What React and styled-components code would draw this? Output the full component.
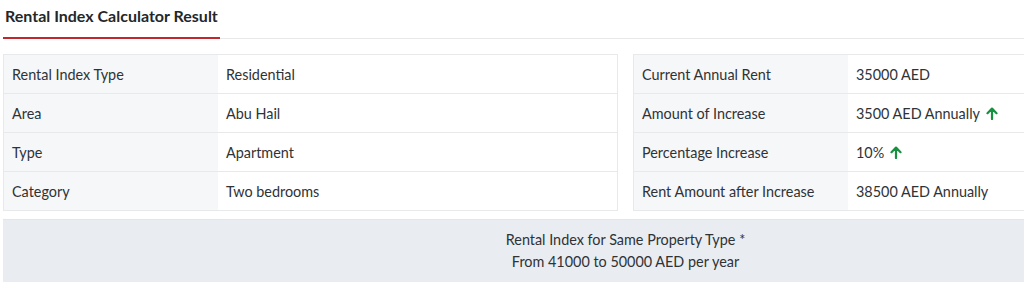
import React from "react";
import styled, { createGlobalStyle } from "styled-components";

const Global = createGlobalStyle`
  html, body { margin: 0; padding: 0; background: #fff; overflow: hidden; }
  body { font-family: "Lato", "Noto Sans", sans-serif; color: #2f3336; }
`;

const Viewport = styled.div`
  width: 100vw;
  overflow: hidden;
`;

const Page = styled.div`
  width: 1245px;
  padding: 0 3px;
`;

const TabBar = styled.div`
  display: flex;
  border-bottom: 1px solid #e6e8ea;
  margin-right: -30px;
`;

const Tab = styled.div`
  font-size: 16px;
  line-height: 19px;
  font-weight: 700;
  color: #23272a;
  padding: 6px 2px 12px 2px;
  width: 217px;
  box-sizing: border-box;
  border-bottom: 2px solid #c0282d;
  margin-bottom: -1px;
  white-space: nowrap;
`;

const Grid = styled.div`
  display: grid;
  grid-template-columns: 615px 615px;
  column-gap: 15px;
  margin-top: 15px;
`;

const Table = styled.div`
  border: 1px solid #e8e9eb;
  border-bottom: none;
`;

const Row = styled.div`
  display: grid;
  grid-template-columns: 214px 1fr;
  height: 38px;
  border-bottom: 1px solid #e8e9eb;
  font-size: 14.4px;
`;

const Label = styled.div`
  background: #f6f7f9;
  display: flex;
  align-items: center;
  padding-left: 8px;
`;

const Value = styled.div`
  display: flex;
  align-items: center;
  padding-left: 8px;
  gap: 6px;
`;

const Summary = styled.div`
  margin-top: 8px;
  background: #e9edf1;
  border-top: 1px solid #e2e6ea;
  height: 62px;
  display: flex;
  flex-direction: column;
  align-items: center;
  justify-content: center;
  font-size: 14.4px;
  line-height: 22px;
`;

const Up = () => (
  <svg width="12" height="13" viewBox="0 0 12 13" fill="none" stroke="#16913f" strokeWidth="2.2" strokeLinecap="round" strokeLinejoin="round">
    <path d="M6 12V1.8M1.5 6.2L6 1.6l4.5 4.6" />
  </svg>
);

const left = [
  ["Rental Index Type", "Residential"],
  ["Area", "Abu Hail"],
  ["Type", "Apartment"],
  ["Category", "Two bedrooms"],
];
const right = [
  ["Current Annual Rent", "35000 AED"],
  ["Amount of Increase", "3500 AED Annually", true],
  ["Percentage Increase", "10%", true],
  ["Rent Amount after Increase", "38500 AED Annually"],
];

export default function App() {
  return (
    <Viewport>
      <Global />
      <Page>
        <TabBar>
          <Tab>Rental Index Calculator Result</Tab>
        </TabBar>
        <Grid>
          <Table>
            {left.map(([l, v]) => (
              <Row key={l}>
                <Label>{l}</Label>
                <Value>{v}</Value>
              </Row>
            ))}
          </Table>
          <Table>
            {right.map(([l, v, up]) => (
              <Row key={l}>
                <Label>{l}</Label>
                <Value>
                  {v}
                  {up && <Up />}
                </Value>
              </Row>
            ))}
          </Table>
        </Grid>
        <Summary>
          <div>Rental Index for Same Property Type *</div>
          <div>From 41000 to 50000 AED per year</div>
        </Summary>
      </Page>
    </Viewport>
  );
}
